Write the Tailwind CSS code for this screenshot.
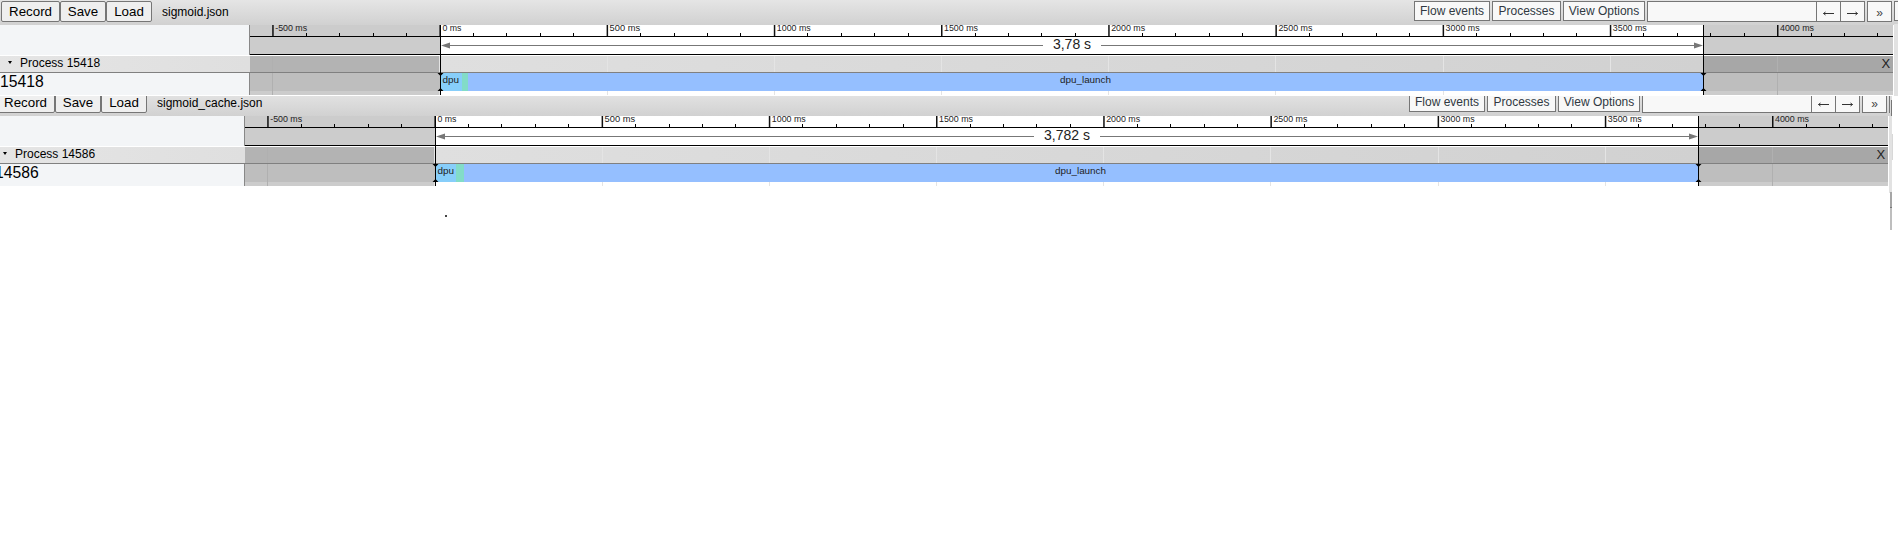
<!DOCTYPE html>
<html lang="en">
<head>
<meta charset="utf-8">
<title>Trace comparison</title>
<script src="https://cdn.jsdelivr.net/npm/@tailwindcss/browser@4"></script>
</head>
<body class="bg-white overflow-hidden">
<main class="relative h-[534px] w-[1898px] overflow-hidden font-['Liberation_Sans',Arial,sans-serif] text-black">
  <div id="first" class="h-[96px] overflow-hidden"></div>
  <div id="second" class="h-[90px] overflow-hidden"></div>
  <div class="absolute left-[445px] top-[215px] h-[2px] w-[2px] bg-[#444]"></div>
  <div class="absolute left-[1894px] top-[1px] h-[20px] w-[4px] border-y border-l border-[#767676] bg-[#f8f8f8]"></div>
  <div class="absolute left-[1894px] top-[24px] h-[73px] w-[4px] bg-[#e2e2e2]"></div>
  <div class="absolute left-[1889px] top-[96px] h-[17px] w-[3px] border-l border-[#767676] bg-[#ddd]"></div>
  <div class="absolute left-[1891px] top-[100px] h-[17px] w-px bg-[#767676]"></div>
  <div class="absolute left-[1892px] top-[96px] h-[38px] w-[6px] bg-white"></div>
  <div class="absolute left-[1889px] top-[116px] h-[77px] w-[3px] bg-[#e2e2e2]"></div>
  <div class="absolute left-[1892px] top-[134px] h-[26px] w-px bg-[#d8d8d8]"></div>
  <div class="absolute left-[1890px] top-[192px] h-[38px] w-[2px] bg-[#bebebe]"><div class="h-[16px] border-b border-[#777] bg-[#a6a6a6]"></div></div>
</main>
<script>
function ruler(label, gap) {
  let s = '';
  for (let i = -1; i <= 8; i++) {
    const x = 189.4 + i * 167.2;
    const width = i < 0 ? 32 : i === 0 ? 19 : i === 1 ? 30.5 : 34;
    s += `<rect x="${x}" y="0" width="1.5" height="11" fill="#111"/><text x="${x + 3}" y="6" font-size="9.3" textLength="${width}" lengthAdjust="spacingAndGlyphs" fill="#222">${i * 500} ms</text>`;
    for (let k = 1; k < 5; k++) {
      const m = Math.round(189.5 + i * 167.2 + k * 33.42);
      s += `<rect x="${m}" y="8" width="1" height="3"/>`;
    }
  }
  return `<svg class="block h-[30px] w-[1643px]" viewBox="0 0 1643 30">
    <rect width="1643" height="30" fill="#ccc"/><rect x="190" width="1263" height="30" fill="#fff"/>${s}
    <path d="M0 11.5H1643M0 29.5H1643" stroke="#000"/>
    <path d="M198 20.5H${822 - gap}M${822 + gap} 20.5H1446" stroke="#777"/>
    <path d="M191 20.5l9-3v6zM1453 20.5l-9-3v6z" fill="#777"/>
    <text x="822" y="24" font-size="14" text-anchor="middle" fill="#222">${label}</text>
    <path d="M190.5 0V30M1453.5 0V30" stroke="#000"/></svg>`;
}
function tracks(dpu, green) {
  let g = '';
  for (let i = -1; i <= 8; i++) {
    const x = Math.round(189.4 + i * 167.2) + .5;
    const out = i < 0 || i > 7;
    g += out ? `<path d="M${x} 1V40" stroke="#b0b0b0"/>` : `<path d="M${x} 1V17M${x} 36V40" stroke="#e4e4e4"/>`;
  }
  return `<svg class="block h-[40px] w-[1643px]" viewBox="0 0 1643 40">
    <rect y="1" width="190" height="16" fill="#b3b3b3"/>
    <rect x="190" y="1" width="1263" height="16" fill="url(#head)"/>
    <rect x="1453" y="1" width="190" height="16" fill="#a7a7a7"/>
    <rect y="18" width="190" height="22" fill="#ccc"/><rect x="1453" y="18" width="190" height="22" fill="#ccc"/>
    <rect y="18" width="190" height="18" fill="#bebebe"/><rect x="1453" y="18" width="190" height="18" fill="#bebebe"/>
    ${g}
    <rect y="17" width="1643" height="1" fill="#808080"/>
    <rect x="190" y="18" width="1263" height="18" fill="#95bfff"/>
    <rect x="190" y="18" width="${dpu}" height="18" fill="#87cefa"/>
    <rect x="${190 + dpu}" y="18" width="${green}" height="18" fill="#82dcc8"/>
    <text x="192.500" y="28" font-size="9.3" textLength="16.500" lengthAdjust="spacingAndGlyphs" fill="#222">dpu</text>
    <text x="810" y="28" font-size="9.3" textLength="51" lengthAdjust="spacingAndGlyphs" fill="#222">dpu_launch</text>
    <path d="M190.5 0V40M1453.5 0V40" stroke="#000"/>
    <path d="M187.500 18h6l-3 3zM187.500 36h6l-3-3zM1450.500 18h6l-3 3zM1450.500 36h6l-3-3z"/>
    <text x="1631.500" y="13" font-size="13" fill="#222">X</text></svg>`;
}
function panel(o) {
  const arrow = d => `<svg class="h-[7px] w-[11px]" viewBox="0 0 11 7" fill="none" stroke="#333"><path d="${d}"/></svg>`;
  return `<section class="h-[95px] w-[1893px] ${o.shift}">
    <div class="flex h-[25px] w-[1898px] items-start bg-linear-to-b from-[#e5e5e5] to-[#d1d1d1] pl-px pt-px">
      <div class="flex h-[21px] text-[13.33px] leading-[19px] whitespace-nowrap">
        <div class="w-[59px] rounded-[2px] border border-[#767676] bg-[#efefef] text-center">Record</div>
        <div class="w-[46px] rounded-[2px] border border-[#767676] bg-[#efefef] text-center">Save</div>
        <div class="w-[46px] rounded-[2px] border border-[#767676] bg-[#efefef] text-center">Load</div>
      </div>
      <div class="ml-[10px] flex-1 text-[12px] leading-[23px]">${o.file}</div>
      <div class="flex h-[20px] gap-[2px] text-[12px] leading-[18px] whitespace-nowrap text-[#303942]">
        <div class="w-[76px] border border-[#767676] bg-[#f8f8f8] text-center">Flow events</div>
        <div class="w-[69px] border border-[#767676] bg-[#f8f8f8] text-center">Processes</div>
        <div class="w-[82px] border border-[#767676] bg-[#f8f8f8] text-center">View Options</div>
      </div>
      <div class="ml-[2px] flex h-[21px]">
        <div class="w-[170px] border border-[#767676] bg-[#f8f8f8]"></div>
        <div class="-ml-px flex w-[25px] items-center justify-center border border-[#767676] bg-[#f8f8f8] pt-[4px]">${arrow('M.5 3.500H11M2.500 2L.5 3.500L2.500 5')}</div>
        <div class="-ml-px flex w-[25px] items-center justify-center border border-[#767676] bg-[#f8f8f8] pt-[4px]">${arrow('M0 3.500H10.500M8.500 2L10.500 3.500L8.500 5')}</div>
        <div class="ml-[2px] mr-[6px] w-[25px] border border-[#767676] bg-[#f8f8f8] text-center text-[12px] leading-[22px] text-[#444]">»</div>
      </div>
    </div>
    <div class="flex h-[30px]"><div class="w-[250px] border-r border-[#888] bg-[#f3f5f7]"></div>${ruler(o.label, o.gap)}</div>
    <div class="flex h-[40px]">
      <div class="w-[250px]">
        <div class="mt-px flex h-[17px] items-center border-b border-[#808080] bg-linear-to-r from-[#e5e5e5] to-[#dfdfdf] pl-[8px] text-[12px]">
          <svg class="mr-[8px] -mt-[3px] h-[3px] w-[4px]" viewBox="0 0 4 3"><path d="M0 0H4L2 3z"/></svg><span class="-mt-[3px]">Process ${o.pid}</span>
        </div>
        <div class="h-[22px] border-r border-[#888] bg-[#f3f5f7] text-[16px] leading-[17px]"><span class="inline-block origin-left scale-x-[0.98]">${o.pid}</span></div>
      </div>${tracks(o.dpu, o.green)}
    </div>
  </section>`;
}
const defs = '<svg class="absolute h-0 w-0"><defs><linearGradient id="head"><stop stop-color="#dfdfdf"/><stop offset="1" stop-color="#d1d1d1"/></linearGradient></defs></svg>';
document.getElementById('first').innerHTML = defs + panel({shift: '', file: 'sigmoid.json', label: '3,78 s', gap: 29, pid: '15418', dpu: 22, green: 6});
document.getElementById('second').innerHTML = panel({shift: '-ml-[5px] -mt-[5px]', file: 'sigmoid_cache.json', label: '3,782 s', gap: 33, pid: '14586', dpu: 21, green: 8});
</script>
</body>
</html>
